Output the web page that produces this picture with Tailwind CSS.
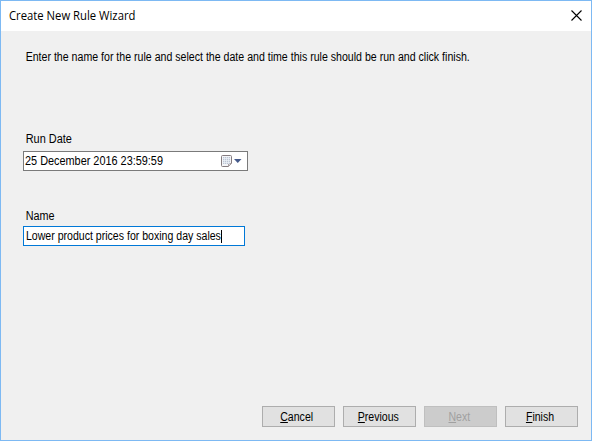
<!DOCTYPE html>
<html lang="en">
<head>
<meta charset="utf-8">
<title>Create New Rule Wizard</title>
<script src="https://cdn.jsdelivr.net/npm/@tailwindcss/browser@4"></script>
</head>
<body class="h-[441px] w-[592px] overflow-hidden">
<div class="flex h-[441px] w-[592px] flex-col border border-[#7db9f3] bg-[#f0f0f0] font-['Liberation_Sans',sans-serif] text-[12px] leading-[14px] whitespace-nowrap text-black">
  <header class="flex h-[30px] shrink-0 items-center justify-between bg-white pr-[9px] pl-2">
    <h1 class="origin-left scale-x-[0.94] font-['Open_Sans',sans-serif] text-xs leading-4">Create New Rule Wizard</h1>
    <svg class="mt-[9px] h-[11px] w-[11px] self-start" viewBox="0 0 11 11" fill="none" stroke="#000" stroke-width="1.1"><path d="M.5.5l10 10M10.500.5l-10 10"/></svg>
  </header>
  <main class="flex flex-1 flex-col pl-[22px]">
    <p class="mt-[19px] origin-left scale-x-[0.883] pl-[3px]">Enter the name for the rule and select the date and time this rule should be run and click finish.</p>
    <label class="mt-[68px] origin-left scale-x-[0.91] pl-[3px]">Run Date</label>
    <div class="mt-[5px] flex h-5 w-[225px] items-center border border-[#7a7a7a] bg-white pr-[5px] pl-[1px]">
      <span class="w-[140px] origin-left scale-x-[0.907]">25 December 2016 23:59:59</span>
      <svg class="ml-auto h-3 w-[21px]" viewBox="0 0 21 12">
        <path d="M1.500.5h8a1 1 0 0 1 1 1v7l-3 3h-6a1 1 0 0 1-1-1v-9a1 1 0 0 1 1-1z" fill="#f4f5f8" stroke="#857c80"/>
        <path d="M10.500 8.500l-3 3v-3z" fill="#d8d3d5" stroke="#a89fa2"/>
        <path d="M2 2h7v7h-7z" fill="#bdc5d5"/>
        <path d="M2 3.500h7M2 5.500h7M2 7.500h7M3.500 2v7M5.500 2v7M7.500 2v7" stroke="#eef2f8" stroke-width=".7"/>
        <path d="M13 4h7.500l-3.750 4z" fill="#44598a"/>
      </svg>
    </div>
    <label class="mt-[38px] origin-left scale-x-[0.9] pl-[3px]">Name</label>
    <div class="mt-[3px] flex h-5 w-[222px] items-center border border-[#0078d7] bg-white pl-[2px]">
      <span class="w-[195px] origin-left scale-x-[0.88]">Lower product prices for boxing day sales</span><i class="h-[13px] w-px bg-black"></i>
    </div>
  </main>
  <footer class="mr-[13px] mb-[13px] flex justify-end gap-2">
    <button class="h-[21px] w-[73px] border border-[#adadad] bg-[#e1e1e1]"><span class="ml-[-4px] inline-block scale-x-[0.88]"><u class="underline-offset-1">C</u>ancel</span></button>
    <button class="h-[21px] w-[73px] border border-[#adadad] bg-[#e1e1e1]"><span class="ml-[-2px] inline-block scale-x-[0.88]"><u class="underline-offset-1">P</u>revious</span></button>
    <button class="h-[21px] w-[73px] border border-[#bfbfbf] bg-[#cccccc] text-[#a0a0a0]" disabled><span class="ml-[-2px] inline-block scale-x-[0.88]"><u class="underline-offset-1">N</u>ext</span></button>
    <button class="h-[21px] w-[73px] border border-[#adadad] bg-[#e1e1e1]"><span class="ml-[-2px] inline-block scale-x-[0.88]"><u class="underline-offset-1">F</u>inish</span></button>
  </footer>
</div>
</body>
</html>
